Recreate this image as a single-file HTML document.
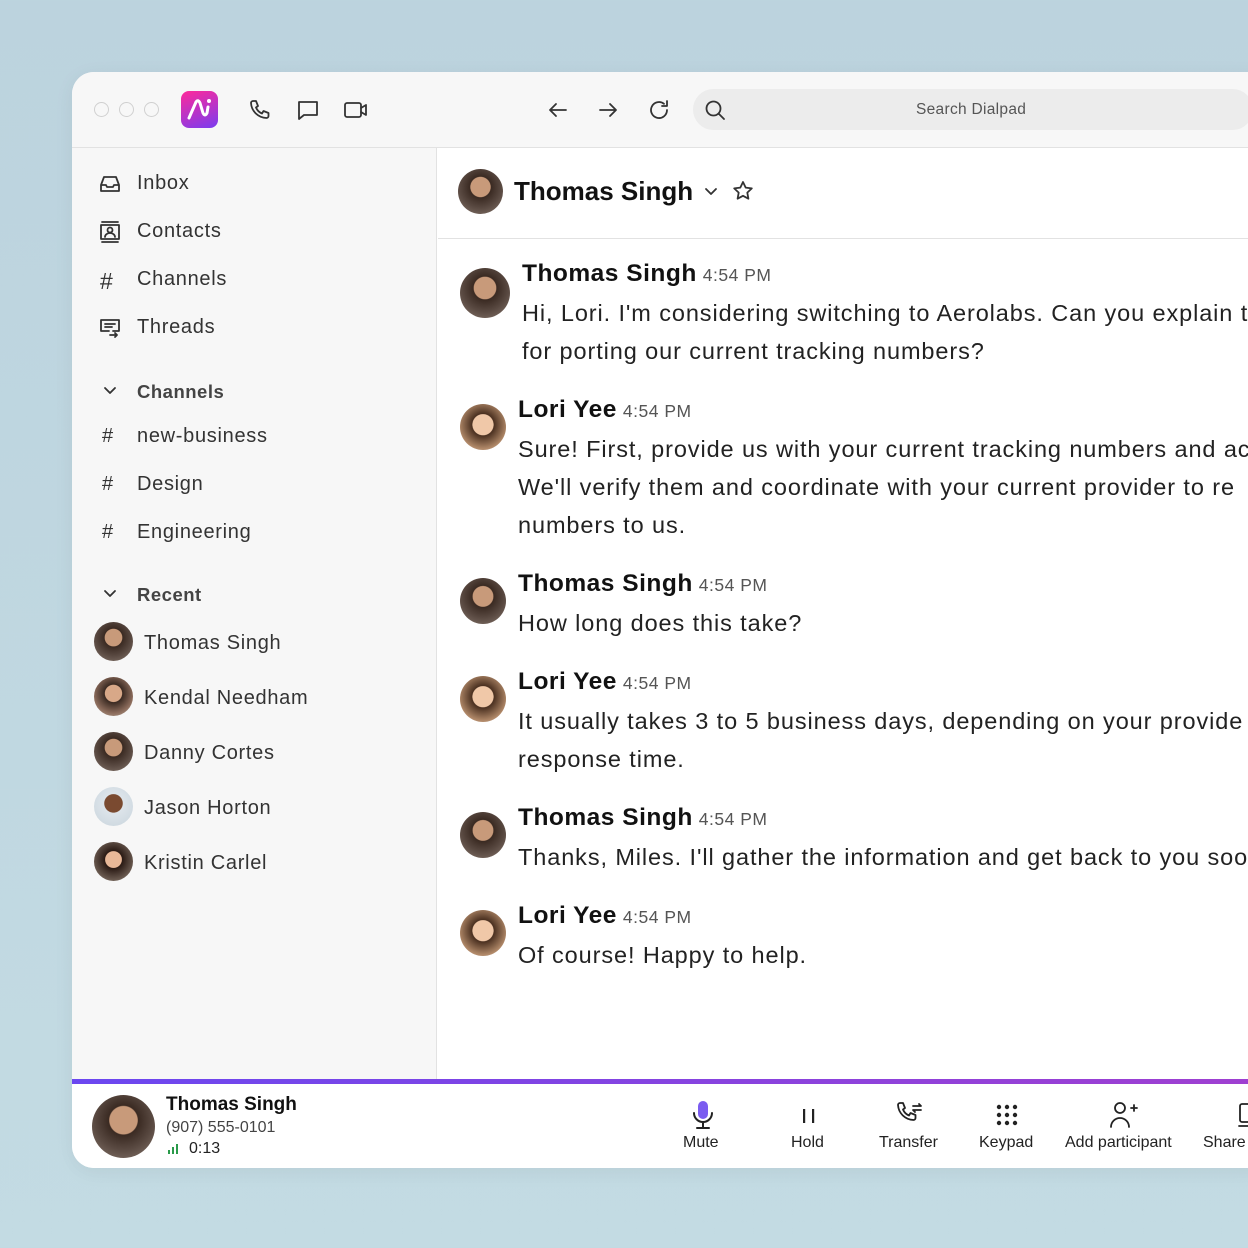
<!DOCTYPE html>
<html><head><meta charset="utf-8"><style>
*{margin:0;padding:0;box-sizing:border-box}
body{width:1248px;height:1248px;overflow:hidden;background:linear-gradient(180deg,#bcd3de 0%,#c3dbe3 100%);font-family:"Liberation Sans",sans-serif;color:#222;position:relative}
.win{position:absolute;left:72px;top:72px;width:1200px;height:1096px;background:#fff;border-radius:22px;overflow:hidden;box-shadow:0 4px 20px rgba(0,0,0,.06)}
.top{position:absolute;left:0;top:0;right:0;height:76px;background:#f7f7f7;border-bottom:1px solid #e2e2e2}
.dot{position:absolute;top:30px;width:15px;height:15px;border:1.5px solid #d0d0d0;border-radius:50%}
.logo{position:absolute;left:109px;top:19px;width:37px;height:37px;border-radius:8px;background:linear-gradient(160deg,#ff2a9a,#7a3cf0)}
.ic{position:absolute;stroke:#333;fill:none;stroke-width:1.8;stroke-linecap:round;stroke-linejoin:round}
.search{position:absolute;left:621px;top:17px;width:560px;height:41px;background:#ececec;border-radius:21px;font-size:15.5px;color:#555;line-height:41px;padding-left:223px;letter-spacing:.3px}
.side{position:absolute;left:0;top:76px;width:365px;height:932px;background:#f7f7f7;border-right:1px solid #e2e2e2}
.si{position:absolute;left:65px;font-size:20px;color:#333;letter-spacing:.7px;margin-top:2px}
.sh{position:absolute;left:65px;font-size:18.5px;font-weight:bold;color:#444;letter-spacing:.5px;margin-top:1px}
.av{position:absolute;border-radius:50%;background:radial-gradient(circle at 50% 40%,#c89a7a 0 28%,#3a2a22 30%,#5a4a42 60%,#8a7a70 100%)}
.avf{background:radial-gradient(circle at 50% 45%,#f0c8a8 0 30%,#4a3020 32%,#b08868 70%,#d8c0a8 100%)}
.hdr{position:absolute;left:366px;top:76px;right:0;height:91px;border-bottom:1px solid #e2e2e2}
.msg{position:absolute;font-size:23.5px;color:#222;line-height:38px;white-space:nowrap;letter-spacing:.9px;margin-top:-4px}
.msg b{font-size:24.5px;color:#111;letter-spacing:.5px;display:inline-block;line-height:34px}
.msg .t{font-size:17.5px;color:#555;margin-left:6px;letter-spacing:.5px}
.call{position:absolute;left:0;top:1007px;right:0;height:89px;background:#fff}
.bar{position:absolute;left:0;top:1007px;right:0;height:5px;background:linear-gradient(90deg,#6b47f0,#a03fd0)}
.cb{position:absolute;top:1062px;font-size:16px;color:#222;text-align:center}
</style></head><body>
<div class="win">
<div class="top">
<div class="dot" style="left:22px"></div><div class="dot" style="left:47px"></div><div class="dot" style="left:72px"></div>
<div class="logo"><svg width="37" height="37" viewBox="0 0 37 37"><path d="M8 27 L15 11 Q17 8 19 12 L22 22 Q24 26 26 22 L27 16" stroke="#fff" stroke-width="3" fill="none" stroke-linecap="round"/><circle cx="28" cy="10" r="2" fill="#fff"/></svg></div>
<svg class="ic" style="left:176px;top:26px" width="24" height="24" viewBox="0 0 24 24"><path d="M5 3h3l2 5-2 1.5a11 11 0 0 0 6 6L15.5 13l5 2v3a2 2 0 0 1-2 2A16 16 0 0 1 3 5a2 2 0 0 1 2-2z"/></svg>
<svg class="ic" style="left:224px;top:26px" width="24" height="24" viewBox="0 0 24 24"><path d="M3 4h18v13H8l-5 4z"/></svg>
<svg class="ic" style="left:271px;top:26px" width="26" height="24" viewBox="0 0 26 24"><rect x="2" y="5" width="16" height="14" rx="2"/><path d="M18 10l5-3v10l-5-3"/></svg>
<svg class="ic" style="left:474px;top:26px" width="24" height="24" viewBox="0 0 24 24"><path d="M20 12H4M10 6l-6 6 6 6"/></svg>
<svg class="ic" style="left:524px;top:26px" width="24" height="24" viewBox="0 0 24 24"><path d="M4 12h16M14 6l6 6-6 6"/></svg>
<svg class="ic" style="left:575px;top:26px" width="24" height="24" viewBox="0 0 24 24"><path d="M20 12a8 8 0 1 1-3-6.2M20 3v5h-5"/></svg>
<div class="search">Search Dialpad</div>
<svg class="ic" style="left:632px;top:27px" width="22" height="22" viewBox="0 0 22 22"><circle cx="9.5" cy="9.5" r="7"/><path d="M15 15l5 5"/></svg>
</div>
<div class="side">
<svg class="ic" style="left:26px;top:24px" width="24" height="24" viewBox="0 0 24 24"><path d="M3 13l3-8h12l3 8v6H3zM3 13h5l1 2h6l1-2h5"/></svg>
<div class="si" style="top:22px">Inbox</div>
<svg class="ic" style="left:26px;top:72px" width="24" height="24" viewBox="0 0 24 24"><path d="M4 2h16M4 22h16"/><rect x="3" y="5" width="18" height="14"/><circle cx="12" cy="10" r="2.5"/><path d="M7 17a5 4 0 0 1 10 0"/></svg>
<div class="si" style="top:70px">Contacts</div>
<div class="si" style="left:28px;top:118px;font-size:23px">#</div>
<div class="si" style="top:118px">Channels</div>
<svg class="ic" style="left:26px;top:168px" width="24" height="24" viewBox="0 0 24 24"><path d="M3 4h18v11h-6M3 4v11h8M7 8h10M7 11h7M12 19h7l-2-2M19 19l-2 2"/></svg>
<div class="si" style="top:166px">Threads</div>
<svg class="ic" style="left:30px;top:234px" width="16" height="16" viewBox="0 0 16 16"><path d="M3 6l5 5 5-5"/></svg>
<div class="sh" style="top:232px">Channels</div>
<div class="si" style="left:30px;top:275px">#</div><div class="si" style="top:275px">new-business</div>
<div class="si" style="left:30px;top:323px">#</div><div class="si" style="top:323px">Design</div>
<div class="si" style="left:30px;top:371px">#</div><div class="si" style="top:371px">Engineering</div>
<svg class="ic" style="left:30px;top:437px" width="16" height="16" viewBox="0 0 16 16"><path d="M3 6l5 5 5-5"/></svg>
<div class="sh" style="top:435px">Recent</div>
<div class="av" style="left:22px;top:474px;width:39px;height:39px"></div><div class="si" style="left:72px;top:482px">Thomas Singh</div>
<div class="av" style="left:22px;top:529px;width:39px;height:39px;background:radial-gradient(circle at 50% 42%,#d8a888 0 28%,#3a2a22 30%,#8a6a5a 65%,#c0b0a0 100%)"></div><div class="si" style="left:72px;top:537px">Kendal Needham</div>
<div class="av" style="left:22px;top:584px;width:39px;height:39px"></div><div class="si" style="left:72px;top:592px">Danny Cortes</div>
<div class="av" style="left:22px;top:639px;width:39px;height:39px;background:radial-gradient(circle at 50% 42%,#7a4a30 0 30%,#dde4ea 32%,#c8d4dc 100%)"></div><div class="si" style="left:72px;top:647px">Jason Horton</div>
<div class="av" style="left:22px;top:694px;width:39px;height:39px;background:radial-gradient(circle at 50% 45%,#e8b898 0 28%,#2a1a14 30%,#6a5a50 70%,#b0a8a0 100%)"></div><div class="si" style="left:72px;top:702px">Kristin Carlel</div>
</div>
<div class="hdr">
<div class="av" style="left:20px;top:21px;width:45px;height:45px"></div>
<div style="position:absolute;left:76px;top:28px;font-size:26px;font-weight:bold;color:#111">Thomas Singh</div>
<svg class="ic" style="left:264px;top:34px" width="18" height="18" viewBox="0 0 18 18"><path d="M4 7l5 5 5-5"/></svg>
<svg class="ic" style="left:293px;top:31px" width="24" height="24" viewBox="0 0 24 24"><path d="M12 3l2.7 5.6 6.1.8-4.5 4.2 1.1 6.1L12 16.8 6.6 19.7l1.1-6.1L3.2 9.4l6.1-.8z"/></svg>
</div>
<div class="av" style="left:388px;top:196px;width:50px;height:50px"></div>
<div class="msg" style="left:450px;top:186px"><b>Thomas Singh</b><span class="t">4:54 PM</span><br>Hi, Lori. I'm considering switching to Aerolabs. Can you explain t<br>for porting our current tracking numbers?</div>
<div class="av avf" style="left:388px;top:332px;width:46px;height:46px"></div>
<div class="msg" style="left:446px;top:322px"><b>Lori Yee</b><span class="t">4:54 PM</span><br>Sure! First, provide us with your current tracking numbers and ac<br>We'll verify them and coordinate with your current provider to re<br>numbers to us.</div>
<div class="av" style="left:388px;top:506px;width:46px;height:46px"></div>
<div class="msg" style="left:446px;top:496px"><b>Thomas Singh</b><span class="t">4:54 PM</span><br>How long does this take?</div>
<div class="av avf" style="left:388px;top:604px;width:46px;height:46px"></div>
<div class="msg" style="left:446px;top:594px"><b>Lori Yee</b><span class="t">4:54 PM</span><br>It usually takes 3 to 5 business days, depending on your provide<br>response time.</div>
<div class="av" style="left:388px;top:740px;width:46px;height:46px"></div>
<div class="msg" style="left:446px;top:730px"><b>Thomas Singh</b><span class="t">4:54 PM</span><br>Thanks, Miles. I'll gather the information and get back to you soo</div>
<div class="av avf" style="left:388px;top:838px;width:46px;height:46px"></div>
<div class="msg" style="left:446px;top:828px"><b>Lori Yee</b><span class="t">4:54 PM</span><br>Of course! Happy to help.</div>
<div class="call"></div><div class="bar"></div>
<div class="av" style="left:20px;top:1023px;width:63px;height:63px"></div>
<div style="position:absolute;left:94px;top:1022px;font-size:19px;font-weight:bold;color:#111">Thomas Singh</div>
<div style="position:absolute;left:94px;top:1047px;font-size:16px;color:#444">(907) 555-0101</div>
<svg style="position:absolute;left:96px;top:1071px" width="12" height="12"><rect x="0" y="7" width="2" height="4" fill="#2a9a4a"/><rect x="4" y="4" width="2" height="7" fill="#2a9a4a"/><rect x="8" y="1" width="2" height="10" fill="#2a9a4a"/></svg>
<div style="position:absolute;left:117px;top:1068px;font-size:16px;color:#222">0:13</div>
<svg style="position:absolute;left:618px;top:1027px" width="26" height="32" viewBox="0 0 26 32"><rect x="8" y="2" width="10" height="18" rx="5" fill="#7b5cf0"/><path d="M4 14a9 9 0 0 0 18 0M13 23v5M7 29h12" stroke="#222" stroke-width="2" fill="none" stroke-linecap="round"/></svg>
<div class="cb" style="left:611px">Mute</div>
<svg style="position:absolute;left:727px;top:1034px" width="20" height="20"><rect x="4" y="3" width="2.2" height="14" fill="#222"/><rect x="13" y="3" width="2.2" height="14" fill="#222"/></svg>
<div class="cb" style="left:719px">Hold</div>
<svg class="ic" style="left:823px;top:1028px;stroke:#222" width="30" height="30" viewBox="0 0 30 30"><path d="M5 3h3l2 5-2 1.5a11 11 0 0 0 6 6L15.5 13l5 2v3a2 2 0 0 1-2 2A16 16 0 0 1 3 5a2 2 0 0 1 2-2zM18 6h8l-2-2M26 10h-8l2 2"/></svg>
<div class="cb" style="left:807px">Transfer</div>
<svg style="position:absolute;left:924px;top:1032px" width="22" height="22" fill="#222"><circle cx="3" cy="3" r="2.2"/><circle cx="11" cy="3" r="2.2"/><circle cx="19" cy="3" r="2.2"/><circle cx="3" cy="11" r="2.2"/><circle cx="11" cy="11" r="2.2"/><circle cx="19" cy="11" r="2.2"/><circle cx="3" cy="19" r="2.2"/><circle cx="11" cy="19" r="2.2"/><circle cx="19" cy="19" r="2.2"/></svg>
<div class="cb" style="left:907px">Keypad</div>
<svg class="ic" style="left:1035px;top:1027px;stroke:#222" width="32" height="32" viewBox="0 0 32 32"><circle cx="13" cy="9" r="5"/><path d="M4 28a9 9 0 0 1 18 0M24 9h6M27 6v6"/></svg>
<div class="cb" style="left:993px">Add participant</div>
<svg class="ic" style="left:1163px;top:1030px;stroke:#222" width="20" height="26" viewBox="0 0 20 26"><rect x="5" y="2" width="14" height="18" rx="2"/><path d="M4 24h14"/></svg>
<div class="cb" style="left:1131px">Share</div>
</div>
</body></html>
